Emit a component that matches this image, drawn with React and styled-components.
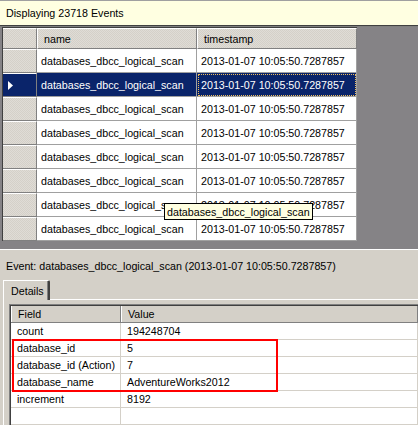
import React from "react";
import styled, { createGlobalStyle } from "styled-components";

const GlobalStyle = createGlobalStyle`
  html, body {
    margin: 0;
    padding: 0;
    background: #d4d0c8;
  }
  * {
    box-sizing: border-box;
  }
`;

const Root = styled.div`
  width: 418px;
  height: 425px;
  overflow: hidden;
  display: flex;
  flex-direction: column;
  background: #d4d0c8;
  font-family: "Liberation Sans", Arial, sans-serif;
  font-size: 10.7px;
  color: #000;
`;

const InfoBar = styled.div`
  height: 26px;
  flex: none;
  display: flex;
  align-items: center;
  padding-left: 6px;
  background: #ffffe1;
  border-top: 1px solid #a0a0a0;
  border-bottom: 1px solid #404040;
`;

const GridArea = styled.div`
  position: relative;
  height: 223px;
  flex: none;
  padding-left: 2px;
  background: #858386;
  border-top: 1px solid #808080;
`;

const EventGrid = styled.div`
  width: 355px;
  border-top: 1px solid #404040;
  border-left: 1px solid #404040;
`;

const GridRow = styled.div`
  display: flex;
  height: ${(p) => (p.$header ? 21 : 24)}px;
  background: ${(p) => (p.$selected ? "#0a246a" : "#fff")};
  color: ${(p) => (p.$selected ? "#fff" : "#000")};
`;

const hatch = `repeating-conic-gradient(#d4d0c8 0 25%, #dfdcd6 0 50%) 0 0 / 2px 2px`;

const RowHead = styled.div`
  width: 34px;
  flex: none;
  display: flex;
  align-items: center;
  padding-left: 5px;
  background: ${(p) => (p.$selected ? "#0a246a" : hatch)};
  border-top: 1px solid #fff;
  border-right: 1px solid #808080;
  border-bottom: 1px solid #808080;
`;

const HeadCell = styled.div`
  width: ${(p) => p.$w}px;
  flex: none;
  display: flex;
  align-items: center;
  padding-left: 6px;
  background: ${hatch};
  border-top: 1px solid #fff;
  border-left: 1px solid #fff;
  border-right: 1px solid #808080;
  border-bottom: 1px solid #808080;
`;

const Cell = styled.div`
  width: ${(p) => p.$w}px;
  flex: none;
  display: flex;
  align-items: center;
  padding-left: 4px;
  white-space: nowrap;
  overflow: hidden;
  border-right: 1px solid #a0a0a0;
  border-bottom: 1px solid #a0a0a0;
  outline: ${(p) => (p.$focus ? "1px dotted #f0c060" : "none")};
  outline-offset: -2px;
`;

const Tooltip = styled.div`
  position: absolute;
  left: 164px;
  top: 176px;
  height: 17px;
  padding: 0 2px 0 2px;
  display: flex;
  align-items: center;
  background: #ffffe1;
  border: 1px solid #000;
  white-space: nowrap;
`;

const DetailPanel = styled.div`
  flex: 1;
  display: flex;
  flex-direction: column;
  border-top: 1px solid #fff;
`;

const EventLabel = styled.div`
  height: 30px;
  flex: none;
  padding: 10px 0 0 6px;
  line-height: 13px;
  white-space: nowrap;
`;

const TabStrip = styled.div`
  height: 19px;
  flex: none;
  display: flex;
  padding-left: 3px;
`;

const Tab = styled.div`
  position: relative;
  z-index: 1;
  height: 20px;
  width: 47px;
  display: flex;
  align-items: center;
  padding-left: 7px;
  background: #d4d0c8;
  border-top: 1px solid #fff;
  border-left: 1px solid #fff;
  border-right: 2px solid #404040;
  border-top-right-radius: 2px;
  box-shadow: inset -1px 0 0 #808080;
`;

const TabPage = styled.div`
  flex: 1;
  margin-left: 3px;
  padding: 4px 0 0 5px;
  border-top: 1px solid #fff;
  border-left: 1px solid #fff;
`;

const FieldGrid = styled.div`
  position: relative;
  background: #fff;
  height: 130px;
  border-top: 1px solid #808080;
  border-left: 1px solid #808080;
  box-shadow: inset 1px 1px 0 #404040;
  padding: 1px 0 0 1px;
`;

const FieldRow = styled.div`
  display: flex;
  height: 17px;
  background: ${(p) => (p.$header ? "#d4d0c8" : "#fff")};
  border-bottom: 1px solid ${(p) => (p.$header ? "#808080" : "#d4d0c8")};
`;

const FieldCell = styled.div`
  width: ${(p) => (p.$first ? "110px" : "auto")};
  flex: ${(p) => (p.$first ? "none" : "1")};
  display: flex;
  align-items: center;
  padding-left: 6px;
  white-space: nowrap;
  border-right: 1px solid ${(p) => (p.$header ? "#808080" : "#d4d0c8")};
  border-left: ${(p) => (p.$header ? "1px solid #fff" : "none")};
`;

const Highlight = styled.div`
  position: absolute;
  left: 2px;
  top: 34px;
  width: 266px;
  height: 53px;
  border: 2px solid #ff0000;
  pointer-events: none;
`;

const Arrow = () => (
  <svg width="6" height="9" viewBox="0 0 6 9">
    <path d="M0 0 L5 4.5 L0 9 Z" fill="#fff" />
  </svg>
);

const stamp = "2013-01-07 10:05:50.7287857";
const eventName = "databases_dbcc_logical_scan";

const fields = [
  ["count", "194248704"],
  ["database_id", "5"],
  ["database_id (Action)", "7"],
  ["database_name", "AdventureWorks2012"],
  ["increment", "8192"],
  ["", ""],
];

const App = () => {
  const rows = Array.from({ length: 8 }, (_, i) => i);

  return (
    <Root>
      <GlobalStyle />
      <InfoBar>Displaying 23718 Events</InfoBar>
      <GridArea>
        <EventGrid>
          <GridRow $header>
            <RowHead />
            <HeadCell $w={160}>name</HeadCell>
            <HeadCell $w={160}>timestamp</HeadCell>
          </GridRow>
          {rows.map((i) => (
            <GridRow key={i} $selected={i === 1}>
              <RowHead $selected={i === 1}>{i === 1 && <Arrow />}</RowHead>
              <Cell $w={160}>{eventName}</Cell>
              <Cell $w={160} $focus={i === 1}>
                {stamp}
              </Cell>
            </GridRow>
          ))}
        </EventGrid>
        <Tooltip>{eventName}</Tooltip>
      </GridArea>
      <DetailPanel>
        <EventLabel>
          Event: {eventName} ({stamp})
        </EventLabel>
        <TabStrip>
          <Tab>Details</Tab>
        </TabStrip>
        <TabPage>
          <FieldGrid>
            <FieldRow $header>
              <FieldCell $first $header>
                Field
              </FieldCell>
              <FieldCell $header>Value</FieldCell>
            </FieldRow>
            {fields.map(([name, value], i) => (
              <FieldRow key={i}>
                <FieldCell $first>{name}</FieldCell>
                <FieldCell>{value}</FieldCell>
              </FieldRow>
            ))}
            <Highlight />
          </FieldGrid>
        </TabPage>
      </DetailPanel>
    </Root>
  );
};

export default App;
